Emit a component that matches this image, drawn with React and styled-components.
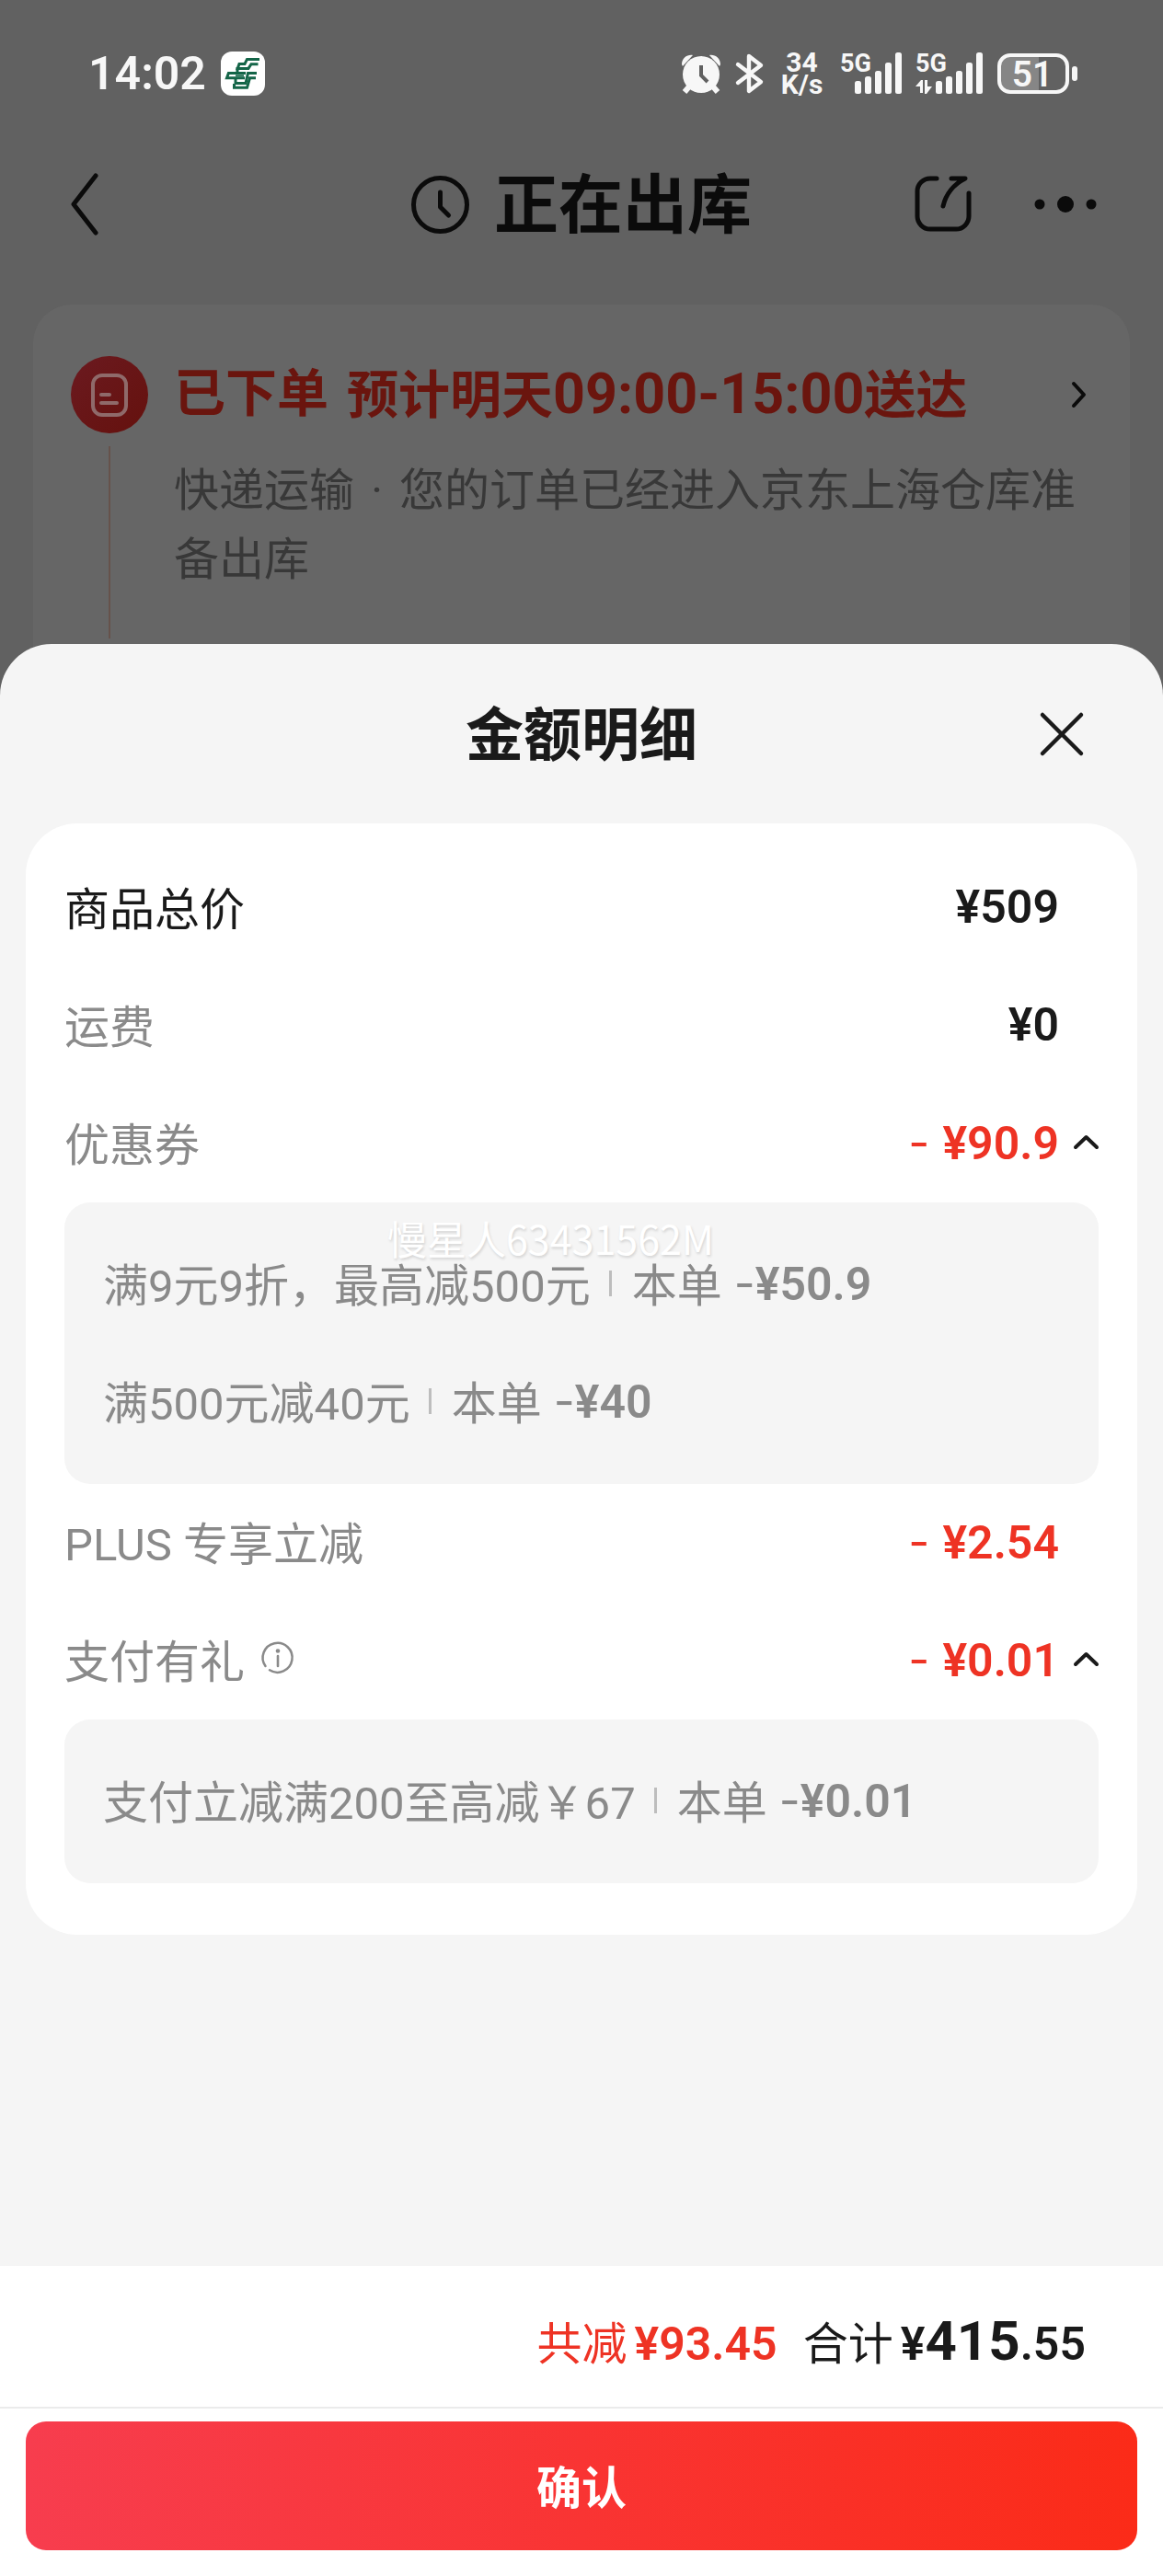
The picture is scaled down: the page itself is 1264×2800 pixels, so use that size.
// NPM
import React, { useState } from "react";
import styled, { createGlobalStyle } from "styled-components";

// STYLES
const GlobalStyle = createGlobalStyle`
  * {
    box-sizing: border-box;
  }

  body {
    margin: 0;
    background: #616161;
    color: #1a1a1a;
    font-family: Roboto, "Noto Sans CJK SC", sans-serif;
    font-size: 49px;
  }

  button {
    padding: 0;
    border: none;
    background: none;
    color: inherit;
    font: inherit;
    cursor: pointer;
  }

  svg {
    display: block;
    flex-shrink: 0;
    overflow: visible;
  }

  h1, h2, h3, p, ul {
    margin: 0;
    padding: 0;
  }
`;

const Page = styled.div`
  display: flex;
  flex-direction: column;
  min-height: 100vh;
`;

const StatusBar = styled.div`
  display: flex;
  align-items: center;
  justify-content: space-between;
  height: 160px;
  padding: 0 93px 0 96px;
  color: #f7f7f7;
`;

const StatusGroup = styled.div`
  display: flex;
  align-items: center;
  gap: 16px;
`;

const Clock = styled.span`
  font-size: 50px;
  font-weight: 600;
  line-height: 60px;
`;

const Speed = styled.div`
  width: 51px;
  font-size: 30px;
  font-weight: 700;
  line-height: 24px;
  text-align: center;
`;

const NavBar = styled.header`
  display: grid;
  grid-template-columns: 1fr auto 1fr;
  align-items: center;
  height: 124px;
  padding: 0 72px;
  color: #0b0b0b;
`;

const NavTitle = styled.div`
  display: flex;
  align-items: center;
  gap: 27px;
`;

const NavHeading = styled.h1`
  padding-top: 4px;
  font-size: 70px;
  font-weight: 700;
  line-height: 84px;
`;

const NavActions = styled.div`
  display: flex;
  align-items: center;
  justify-content: ${props => (props.$end ? "flex-end" : "flex-start")};
  gap: 68px;
`;

const OrderCard = styled.section`
  display: flex;
  gap: 28px;
  margin: 47px 36px 0;
  padding: 56px 48px 62px 41px;
  border-radius: 42px 42px 0 0;
  background: #666;
`;

const Timeline = styled.div`
  display: flex;
  flex-direction: column;
  align-items: center;
  gap: 14px;
`;

const TimelineLine = styled.div`
  flex-grow: 1;
  width: 2px;
  background: #66524b;
`;

const OrderBody = styled.div`
  flex-grow: 1;
  padding-bottom: 48px;
`;

const OrderTitle = styled.div`
  display: flex;
  align-items: center;
  justify-content: space-between;
  height: 84px;
  color: #6a150e;
`;

const OrderHeading = styled.h2`
  display: flex;
  gap: 20px;
  font-size: 56px;
  font-weight: 700;
  line-height: 84px;
`;

const OrderTime = styled.span`
  font-size: 61px;
`;

const OrderText = styled.p`
  margin-top: 25px;
  color: #383838;
  line-height: 75px;
`;

const Dot = styled.span`
  margin: 0 6px;
`;

const Sheet = styled.main`
  position: relative;
  display: flex;
  flex-direction: column;
  flex-grow: 1;
  margin-top: -56px;
  border-radius: 56px 56px 0 0;
  background: #f5f5f5;
`;

const SheetHeader = styled.div`
  display: grid;
  grid-template-columns: 1fr auto 1fr;
  align-items: center;
  height: 195px;
  padding: 0 86px;
`;

const SheetTitle = styled.h2`
  grid-column: 2;
  padding-top: 4px;
  font-size: 63px;
  font-weight: 700;
  line-height: 84px;
`;

const CloseButton = styled.button`
  justify-self: end;
`;

const Panel = styled.section`
  margin: 0 28px 56px;
  padding: 28px 42px 56px;
  border-radius: 56px;
  background: #fff;
`;

const Row = styled.div`
  display: flex;
  align-items: center;
  justify-content: space-between;
  height: 128px;
  padding-bottom: 6px;
`;

const Label = styled.div`
  display: flex;
  align-items: center;
  gap: 18px;
  color: ${props => (props.$strong ? "#1a1a1a" : "#8a8a8a")};
`;

const Value = styled.div`
  display: grid;
  grid-template-columns: auto 43px;
  align-items: center;
  justify-items: end;
  padding-top: 3px;
  color: ${props => (props.$red ? "#ee3324" : "#1a1a1a")};
`;

const Amount = styled.span`
  font-size: 50px;
  font-weight: 600;
  white-space: pre;
`;

const Dash = styled.span`
  font-family: Inter, sans-serif;
  font-weight: 400;
`;

const Toggle = styled.button`
  color: #1a1a1a;

  svg {
    transform: ${props => (props.$open ? "none" : "rotate(180deg)")};
  }
`;

const DetailList = styled.ul`
  position: relative;
  padding: 25px 42px;
  border-radius: 28px;
  background: #f5f5f5;
  color: #8a8a8a;
  list-style: none;
`;

const DetailItem = styled.li`
  display: flex;
  align-items: center;
  height: 128px;
  padding-bottom: 6px;
`;

const Divider = styled.span`
  width: 3px;
  height: 28px;
  margin: 4px 22px 0 20px;
  background: #bdbdbd;
`;

const DetailAmount = styled(Amount)`
  margin-left: 13px;
  padding-top: 4px;
`;

const Watermark = styled.span`
  position: absolute;
  top: 8px;
  left: 351px;
  color: #fff;
  font-family: "Noto Sans CJK SC", sans-serif;
  font-size: 43px;
  line-height: 60px;
  text-shadow: 1px 2px 3px rgba(0, 0, 0, 0.14);
  pointer-events: none;
`;

const Footer = styled.footer`
  margin-top: auto;
  background: #fff;
`;

const Summary = styled.div`
  display: flex;
  align-items: baseline;
  justify-content: flex-end;
  gap: 28px;
  height: 155px;
  padding: 40px 84px 0 28px;
  border-bottom: 2px solid #ebebeb;
  line-height: 84px;
`;

const SummaryItem = styled.div`
  display: flex;
  align-items: baseline;
  gap: 8px;
  color: ${props => (props.$red ? "#ee3324" : "#1a1a1a")};
`;

const BigNumber = styled.span`
  font-size: 60px;
  font-weight: 700;
`;

const ConfirmWrap = styled.div`
  padding: 14px 28px 28px;
`;

const ConfirmButton = styled.button`
  display: block;
  width: 100%;
  height: 140px;
  padding-bottom: 4px;
  border-radius: 22px;
  background: linear-gradient(90deg, #f73d4e, #fb2b18);
  color: #fff;
  font-weight: 700;
`;

// ICONS
const stroke = {
  fill: "none",
  stroke: "currentColor",
  strokeLinecap: "round",
  strokeLinejoin: "round"
};

const PostLogo = () => (
  <svg width="48" height="48" viewBox="0 0 48 48">
    <rect width="48" height="48" rx="12" fill="#fff" />
    <g fill="none" stroke="#146548" strokeWidth="3">
      <path d="M42 8.4H28.5L26 13.4H20L17.5 20.5" />
      <path d="M40.5 13.8H33L30 18.4H18" />
      <path d="M18 17v6" />
      <path d="M27 23.6H8.4L6.5 28.8H26" />
      <path d="M39 23.6H29.5L27 34.5H16V29" />
      <path d="M38 28.8H31.5L28.5 39.3H13" />
      <path d="M16 26.2h9" strokeWidth="1.6" />
      <path d="M14.5 35v5" />
    </g>
  </svg>
);

const AlarmIcon = () => (
  <svg width="44" height="44" viewBox="0 0 44 44">
    <path d="M10 35l-6 7M34 35l6 7" stroke="currentColor" strokeWidth="6" />
    <path d="M1 12C1 5 7 1 13 2L2 14zM43 12C43 5 37 1 31 2l11 12z" fill="currentColor" />
    <circle cx="22" cy="23" r="20" fill="currentColor" />
    <path d="M22 13v11l7 7" fill="none" stroke="#616161" strokeWidth="4" />
  </svg>
);

const BluetoothIcon = () => (
  <svg width="30" height="44" viewBox="0 0 30 44">
    <path d="M2 12l25 19-13 10V3l13 10L2 32" {...stroke} strokeWidth="4.4" />
  </svg>
);

const BARS = [31, 26, 20, 11, 0];

const Signal = ({ data }) => (
  <svg width={data ? 72 : 66} height="46" viewBox={data ? "-6 0 72 46" : "0 0 66 46"}>
    <text
      x={data ? -6 : 0}
      y="21"
      fill="currentColor"
      fontFamily="Roboto"
      fontSize="27"
      fontWeight="700"
    >
      5G
    </text>
    {BARS.map((top, i) => (
      <rect key={top} x={16 + i * 11} y={top} width="7" height={45 - top} rx="2.5" fill="currentColor" />
    ))}
    {data && <path d="M-6 37l6-7h2v14h-3v-7zM4 30h3v7h5l-6 8H4z" fill="currentColor" />}
  </svg>
);

const Battery = () => (
  <svg width="88" height="46" viewBox="0 0 88 46">
    <path d="M14 4h32v38H14A10 10 0 0 1 4 32V14A10 10 0 0 1 14 4z" fill="#868686" />
    <rect x="3" y="3" width="74" height="40" rx="12" fill="none" stroke="currentColor" strokeWidth="4" />
    <rect x="82" y="15" width="6" height="16" rx="3" fill="currentColor" />
    <text
      x="39"
      y="37"
      fill="currentColor"
      fontFamily="Roboto"
      fontSize="39"
      fontWeight="600"
      textAnchor="middle"
    >
      51
    </text>
  </svg>
);

const BackIcon = () => (
  <svg width="36" height="72" viewBox="0 0 36 72">
    <path d="M32 5L8 36l24 31" {...stroke} strokeWidth="5" />
  </svg>
);

const ClockIcon = () => (
  <svg width="63" height="63" viewBox="0 0 63 63">
    <circle cx="31.5" cy="31.5" r="29" {...stroke} strokeWidth="5" />
    <path d="M31.5 18v16l9 9" {...stroke} strokeWidth="5" />
  </svg>
);

const ShareIcon = () => (
  <svg width="62" height="62" viewBox="0 0 62 62">
    <path
      d="M24 3h-7A14 14 0 0 0 3 17v27a14 14 0 0 0 14 14h28a14 14 0 0 0 14-14V19"
      {...stroke}
      strokeWidth="5"
    />
    <path d="M40 3h15C43 9 34 20 31 33" {...stroke} strokeWidth="5" />
  </svg>
);

const MoreIcon = () => (
  <svg width="68" height="20" viewBox="0 0 68 20" fill="currentColor">
    <circle cx="6" cy="10" r="5.5" />
    <circle cx="34" cy="10" r="9" />
    <circle cx="62" cy="10" r="5.5" />
  </svg>
);

const OrderIcon = () => (
  <svg width="84" height="84" viewBox="0 0 84 84">
    <defs>
      <linearGradient id="order" x1="0" y1="0" x2="1" y2="1">
        <stop offset="0" stopColor="#6b1a20" />
        <stop offset="1" stopColor="#65110d" />
      </linearGradient>
    </defs>
    <circle cx="42" cy="42" r="42" fill="url(#order)" />
    <g fill="none" stroke="#8f6a6a" strokeWidth="4" strokeLinecap="round">
      <rect x="24" y="21" width="36" height="43" rx="10" />
      <path d="M33 42h9M33 51h17" />
    </g>
  </svg>
);

const ChevronRight = () => (
  <svg width="16" height="28" viewBox="0 0 16 28">
    <path d="M3 2l11 12L3 26" {...stroke} stroke="#0b0b0b" strokeWidth="4" />
  </svg>
);

const ChevronUp = () => (
  <svg width="27" height="17" viewBox="0 0 27 17">
    <path d="M2 14L13.5 3 25 14" {...stroke} strokeWidth="4" />
  </svg>
);

const CloseIcon = () => (
  <svg width="48" height="48" viewBox="0 0 48 48">
    <path d="M3 3l42 42M45 3L3 45" {...stroke} strokeWidth="4.5" />
  </svg>
);

const InfoIcon = () => (
  <svg width="36" height="36" viewBox="0 0 36 36">
    <path d="M4.5 27A16 16 0 1 1 9 31.3" {...stroke} strokeWidth="2.5" />
    <circle cx="18" cy="10.5" r="2.3" fill="currentColor" />
    <path d="M18 16v11" {...stroke} strokeWidth="2.6" />
  </svg>
);

// DATA
const ROWS = [
  { label: "商品总价", amount: "¥509", strong: true },
  { label: "运费", amount: "¥0" },
  {
    label: "优惠券",
    amount: "¥90.9",
    minus: true,
    watermark: "慢星人63431562M",
    details: [
      { text: "满9元9折，最高减500元", amount: "¥50.9" },
      { text: "满500元减40元", amount: "¥40" }
    ]
  },
  { label: "PLUS 专享立减", amount: "¥2.54", minus: true },
  {
    label: "支付有礼",
    amount: "¥0.01",
    minus: true,
    info: true,
    details: [{ text: "支付立减满200至高减￥67", amount: "¥0.01" }]
  }
];

// COMPONENTS
function PriceRow({ row }) {
  const [open, setOpen] = useState(true);

  return (
    <>
      <Row>
        <Label $strong={row.strong}>
          {row.label}
          {row.info && (
            <button type="button" aria-label="说明">
              <InfoIcon />
            </button>
          )}
        </Label>
        <Value $red={row.minus}>
          <Amount>
            {row.minus && <Dash>- </Dash>}
            {row.amount}
          </Amount>
          {row.details && (
            <Toggle
              type="button"
              $open={open}
              aria-expanded={open}
              aria-label={row.label}
              onClick={() => setOpen(!open)}
            >
              <ChevronUp />
            </Toggle>
          )}
        </Value>
      </Row>
      {row.details && open && (
        <DetailList>
          {row.details.map(item => (
            <DetailItem key={item.text}>
              {item.text}
              <Divider />
              本单
              <DetailAmount>
                <Dash>-</Dash>
                {item.amount}
              </DetailAmount>
            </DetailItem>
          ))}
          {row.watermark && <Watermark>{row.watermark}</Watermark>}
        </DetailList>
      )}
    </>
  );
}

// MODULE
export default function App() {
  return (
    <Page>
      <GlobalStyle />
      <StatusBar>
        <StatusGroup>
          <Clock>14:02</Clock>
          <PostLogo />
        </StatusGroup>
        <StatusGroup>
          <AlarmIcon />
          <BluetoothIcon />
          <Speed>
            <div>34</div>
            <div>K/s</div>
          </Speed>
          <Signal />
          <Signal data />
          <Battery />
        </StatusGroup>
      </StatusBar>
      <NavBar>
        <NavActions>
          <button type="button" aria-label="返回">
            <BackIcon />
          </button>
        </NavActions>
        <NavTitle>
          <ClockIcon />
          <NavHeading>正在出库</NavHeading>
        </NavTitle>
        <NavActions $end>
          <button type="button" aria-label="分享">
            <ShareIcon />
          </button>
          <button type="button" aria-label="更多">
            <MoreIcon />
          </button>
        </NavActions>
      </NavBar>
      <OrderCard>
        <Timeline>
          <OrderIcon />
          <TimelineLine />
        </Timeline>
        <OrderBody>
          <OrderTitle>
            <OrderHeading>
              <span>已下单</span>
              <span>
                预计明天<OrderTime>09:00-15:00</OrderTime>送达
              </span>
            </OrderHeading>
            <button type="button" aria-label="查看物流">
              <ChevronRight />
            </button>
          </OrderTitle>
          <OrderText>
            快递运输 <Dot>·</Dot> 您的订单已经进入京东上海仓库准备出库
          </OrderText>
        </OrderBody>
      </OrderCard>
      <Sheet>
        <SheetHeader>
          <SheetTitle>金额明细</SheetTitle>
          <CloseButton type="button" aria-label="关闭">
            <CloseIcon />
          </CloseButton>
        </SheetHeader>
        <Panel>
          {ROWS.map(row => (
            <PriceRow key={row.label} row={row} />
          ))}
        </Panel>
        <Footer>
          <Summary>
            <SummaryItem $red>
              共减<Amount>¥93.45</Amount>
            </SummaryItem>
            <SummaryItem>
              合计
              <Amount>
                ¥<BigNumber>415</BigNumber>.55
              </Amount>
            </SummaryItem>
          </Summary>
          <ConfirmWrap>
            <ConfirmButton type="button">确认</ConfirmButton>
          </ConfirmWrap>
        </Footer>
      </Sheet>
    </Page>
  );
}
